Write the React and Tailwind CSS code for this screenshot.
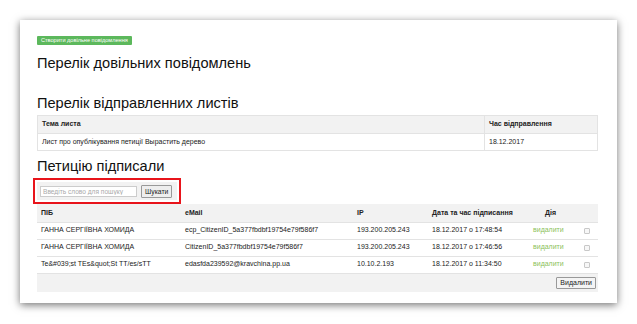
import React from 'react';

const signers = [
  { name: 'ГАННА СЕРГІЇВНА ХОМИДА', email: 'ecp_CitizenID_5a377fbdbf19754e79f586f7', ip: '193.200.205.243', date: '18.12.2017 о 17:48:54' },
  { name: 'ГАННА СЕРГІЇВНА ХОМИДА', email: 'CitizenID_5a377fbdbf19754e79f586f7', ip: '193.200.205.243', date: '18.12.2017 о 17:46:56' },
  { name: 'Te&#039;st TEs&quot;St TT/es/sTT', email: 'edasfda239592@kravchina.pp.ua', ip: '10.10.2.193', date: '18.12.2017 о 11:34:50' },
];

const App = () => {
  return (
    <div className="w-[637px] h-[324px] bg-white p-[20px] font-['Liberation_Sans',Arial,sans-serif] text-[#222]">
      <div className="w-[597px] h-[283px] bg-white shadow-[0_2px_8px_rgba(0,0,0,0.55)] pl-[17px] pr-[19px] pt-[16px]">
        <button className="block h-[9px] px-[4px] bg-[#5cb85c] rounded-[1px] text-white text-[5.6px] leading-[9px]">
          Створити довільне повідомлення
        </button>

        <h1 className="mt-[9px] text-[14.6px] leading-[18px] text-[#111]">Перелік довільних повідомлень</h1>
        <h2 className="mt-[22px] text-[14.6px] leading-[18px] text-[#111]">Перелік відправленних листів</h2>

        <table className="mt-[3px] w-full border-collapse text-[7px]">
          <thead>
            <tr className="bg-[#f2f2f2] h-[18px]">
              <th className="text-left font-bold px-[4px] border border-[#e3e3e3]">Тема листа</th>
              <th className="text-left font-bold px-[4px] border border-[#e3e3e3] w-[113px]">Час відправлення</th>
            </tr>
          </thead>
          <tbody>
            <tr className="h-[17px]">
              <td className="px-[4px] border border-[#e3e3e3]">Лист про опублікування петиції Вырастить дерево</td>
              <td className="px-[4px] border border-[#e3e3e3]">18.12.2017</td>
            </tr>
          </tbody>
        </table>

        <h3 className="mt-[6px] text-[14.6px] leading-[18px] text-[#111]">Петицію підписали</h3>

        <div className="mt-[3px] -ml-[4px] w-[148px] h-[26px] border-2 border-[#e8141b] p-[2px]">
          <div className="h-full bg-[#f2f2f2] flex items-center gap-[4px] pl-[3px]">
            <input
              placeholder="Введіть слово для пошуку"
              className="w-[97px] h-[11px] bg-white border border-[#ccc] text-[6.6px] px-[2px] placeholder:text-[#aaa] outline-none"
            />
            <button className="h-[13px] px-[3px] bg-[#eee] border border-[#999] rounded-[1px] text-[6.8px] leading-[11px] text-[#222]">
              Шукати
            </button>
          </div>
        </div>

        <table className="w-full border-collapse text-[7px]">
          <thead>
            <tr className="bg-[#f2f2f2] h-[18px]">
              <th className="text-left font-bold pl-[4px] w-[148px]">ПІБ</th>
              <th className="text-left font-bold w-[172px]">eMail</th>
              <th className="text-left font-bold w-[75px]">IP</th>
              <th className="text-left font-bold w-[101px]">Дата та час підписання</th>
              <th className="text-left font-bold pl-[12px]">Дія</th>
              <th className="w-[14px]"></th>
            </tr>
          </thead>
          <tbody>
            {signers.map((s, i) => (
              <tr key={i} className="h-[17px] border-t border-[#e3e3e3]">
                <td className="pl-[4px]">{s.name}</td>
                <td>{s.email}</td>
                <td>{s.ip}</td>
                <td>{s.date}</td>
                <td className="text-[#8cbf5a]">видалити</td>
                <td>
                  <div className="w-[6px] h-[6px] border border-[#c8c8c8] rounded-[1px] bg-[#f7f7f7]"></div>
                </td>
              </tr>
            ))}
            <tr className="h-[19px] bg-[#f2f2f2] border-t border-[#e3e3e3]">
              <td colSpan={6} className="text-right pr-[2px]">
                <button className="h-[12px] px-[3px] bg-[#f4f4f4] border border-[#999] rounded-[1px] text-[7px] leading-[10px] text-[#222]">
                  Видалити
                </button>
              </td>
            </tr>
          </tbody>
        </table>
      </div>
    </div>
  );
};

export default App;
